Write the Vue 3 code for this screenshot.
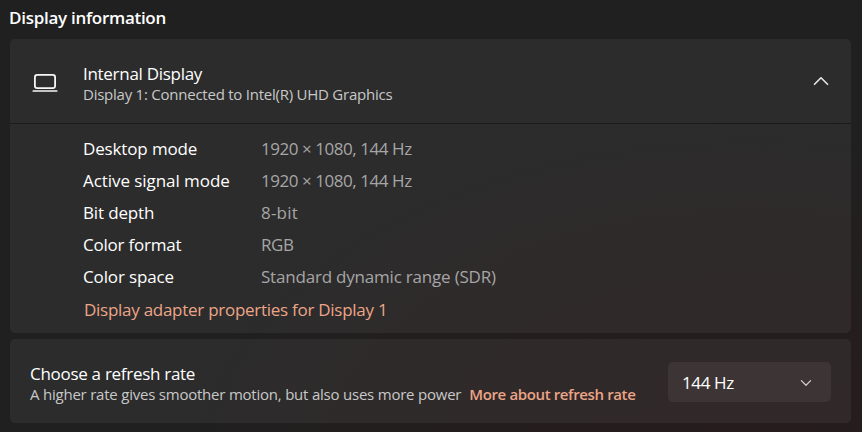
<template>
  <main class="settings">
    <h1 class="section-title">Display information</h1>

    <section class="card">
      <header class="card-header">
        <svg class="laptop" width="28" height="22" viewBox="0 0 28 22" fill="none" stroke="#f6f6f6">
          <rect x="3.9" y="2.9" width="20.2" height="13.2" rx="2.4" stroke-width="1.8" />
          <path d="M2.3 19h23.4" stroke-width="1.7" stroke-linecap="round" />
        </svg>
        <div class="card-text">
          <h2 class="title">Internal Display</h2>
          <p class="subtitle connection">Display 1: Connected to Intel(R) UHD Graphics</p>
        </div>
        <svg class="chevron" width="16" height="10" viewBox="0 0 16 10" fill="none" stroke="#e8e8e8">
          <path d="M1.5 8.3 8 1.8l6.5 6.5" stroke-width="1.6" stroke-linecap="round" stroke-linejoin="round" />
        </svg>
      </header>

      <div class="details">
        <dl>
          <div v-for="row in rows" :key="row.key" class="row" :class="row.key">
            <dt>{{ row.label }}</dt>
            <dd>{{ row.value }}</dd>
          </div>
        </dl>
        <a class="adapter-link">Display adapter properties for Display 1</a>
      </div>
    </section>

    <section class="card refresh">
      <div class="card-text">
        <h2 class="title">Choose a refresh rate</h2>
        <p class="subtitle hint">
          <span>A higher rate gives smoother motion, but also uses more power</span>
          <a class="more-link">More about refresh rate</a>
        </p>
      </div>
      <button class="select" type="button">
        <span>{{ refreshRate }}</span>
        <svg width="12" height="8" viewBox="0 0 12 8" fill="none" stroke="#cfcbcb">
          <path d="m1.4 1.6 4.6 4.6 4.6-4.6" stroke-width="1.3" stroke-linecap="round" stroke-linejoin="round" />
        </svg>
      </button>
    </section>
  </main>
</template>

<script setup>
import { ref } from 'vue';

const refreshRate = ref('144 Hz');

const rows = [
  { key: 'desktop', label: 'Desktop mode', value: '1920 × 1080, 144 Hz' },
  { key: 'signal', label: 'Active signal mode', value: '1920 × 1080, 144 Hz' },
  { key: 'depth', label: 'Bit depth', value: '8-bit' },
  { key: 'format', label: 'Color format', value: 'RGB' },
  { key: 'space', label: 'Color space', value: 'Standard dynamic range (SDR)' }
];
</script>

<style>
body {
  background: #202020;
}
</style>

<style scoped>
.settings {
  box-sizing: border-box;
  height: 432px;
  padding: 0 11px 0 10px;
  overflow: hidden;
  background:
    radial-gradient(ellipse 600px 350px at 88% 108%, #261c1d 0%, rgba(38, 28, 29, 0.75) 40%, rgba(32, 32, 32, 0) 100%),
    #202020;
  color: #fff;
  font-family: "Open Sans", "Noto Sans", sans-serif;
  font-size: 17px;
  white-space: nowrap;
}

h1,
h2,
p,
dl,
dd {
  margin: 0;
}

.section-title {
  height: 39px;
  margin-left: -1px;
  font-size: 17px;
  font-weight: 600;
  line-height: 35px;
  letter-spacing: -0.28px;
}

.card {
  box-sizing: border-box;
  border-radius: 5px;
  background: rgba(255, 255, 255, 0.055);
}

.card-header {
  display: flex;
  align-items: center;
  box-sizing: border-box;
  height: 85px;
  padding: 2px 22px 0 21px;
  border-bottom: 1px solid #1c1b1b;
}

.chevron {
  margin-bottom: 3px;
}

.laptop {
  margin-top: 2px;
  margin-right: 24px;
}

.card-text {
  flex: 1;
  padding-top: 3px;
}

.title {
  font-size: 17px;
  font-weight: 400;
  line-height: 21px;
  letter-spacing: -0.29px;
}

.subtitle {
  color: #c8c8c8;
  font-size: 15px;
  line-height: 20px;
  letter-spacing: -0.22px;
}

.connection {
  letter-spacing: -0.24px;
}

.details {
  box-sizing: border-box;
  height: 209px;
  padding: 9px 0 0 73px;
}

.row {
  display: flex;
  height: 32px;
  line-height: 31px;
  letter-spacing: -0.14px;
}

dt {
  width: 178px;
}

dd {
  color: #a6a6a6;
}

.signal dt {
  letter-spacing: -0.06px;
}

.format dt {
  letter-spacing: -0.22px;
}

.desktop dd,
.signal dd {
  letter-spacing: -0.45px;
}

.depth dd {
  letter-spacing: 0.2px;
}

.format dd {
  letter-spacing: -0.4px;
}

.space dd {
  letter-spacing: -0.2px;
}

.adapter-link {
  display: block;
  margin-left: 1px;
  color: #eba587;
  line-height: 33px;
  letter-spacing: -0.27px;
}

.refresh {
  display: flex;
  align-items: center;
  height: 84px;
  margin-top: 6px;
  padding: 2px 20px 0;
}

.hint {
  display: flex;
  gap: 8px;
}

.more-link {
  color: #eba587;
  font-weight: 600;
  letter-spacing: -0.37px;
}

.select {
  display: flex;
  align-items: center;
  justify-content: space-between;
  box-sizing: border-box;
  width: 163px;
  height: 40px;
  padding: 1px 19px 0 14px;
  border: 0;
  border-radius: 5px;
  background: #3d3535;
  color: #fff;
  font: inherit;
  letter-spacing: -0.37px;
}
</style>
